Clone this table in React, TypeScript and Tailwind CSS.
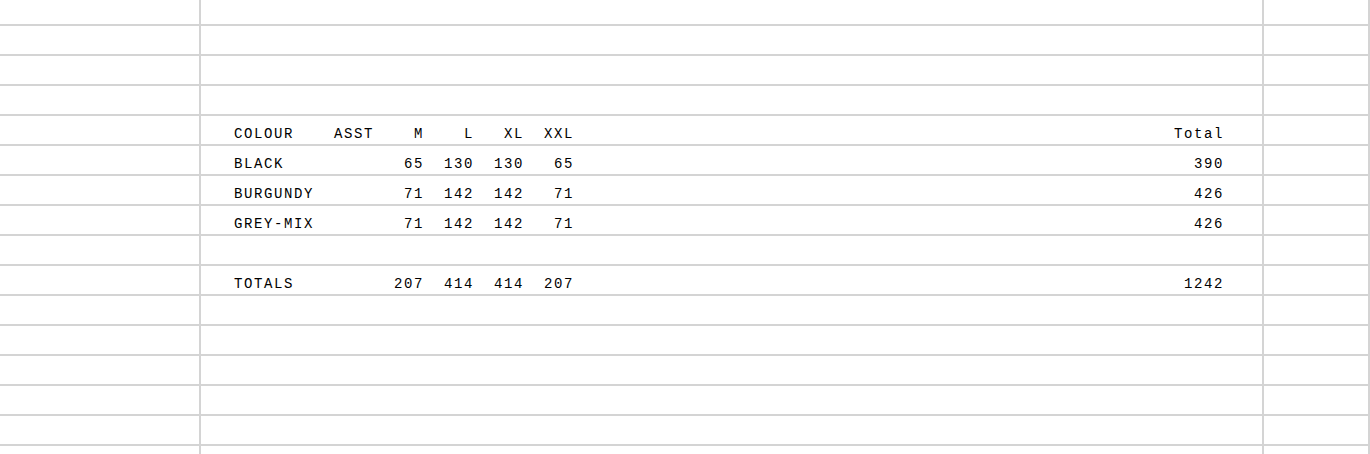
import React from 'react';

type Line = { label: string; asst: string; m: string; l: string; xl: string; xxl: string; total: string };

const lines: Record<number, Line> = {
  4: { label: 'COLOUR', asst: 'ASST', m: 'M', l: 'L', xl: 'XL', xxl: 'XXL', total: 'Total' },
  5: { label: 'BLACK', asst: '', m: '65', l: '130', xl: '130', xxl: '65', total: '390' },
  6: { label: 'BURGUNDY', asst: '', m: '71', l: '142', xl: '142', xxl: '71', total: '426' },
  7: { label: 'GREY-MIX', asst: '', m: '71', l: '142', xl: '142', xxl: '71', total: '426' },
  9: { label: 'TOTALS', asst: '', m: '207', l: '414', xl: '414', xxl: '207', total: '1242' },
};

const Cells: React.FC<{ line?: Line }> = ({ line }) => (
  <>
    <div className="w-[201px] shrink-0 border-r-2 border-[#d4d4d4]" />
    <div className="w-[1063px] shrink-0 border-r-2 border-[#d4d4d4] flex items-end pb-[2px] pl-[33px] font-['Liberation_Mono',monospace] text-[14px] leading-[16px] tracking-[1.6px] text-black whitespace-pre">
      {line && (
        <>
          <span className="w-[100px]">{line.label}</span>
          <span className="w-[40px] text-right">{line.asst}</span>
          <span className="w-[50px] text-right">{line.m}</span>
          <span className="w-[50px] text-right">{line.l}</span>
          <span className="w-[50px] text-right">{line.xl}</span>
          <span className="w-[50px] text-right">{line.xxl}</span>
          <span className="w-[650px] text-right">{line.total}</span>
        </>
      )}
    </div>
    <div className="w-[106px] shrink-0 border-r-2 border-[#d4d4d4]" />
  </>
);

export default function App() {
  const rows = Array.from({ length: 14 }, (_, i) => i + 1);
  return (
    <div className="w-[1370px] h-[454px] overflow-hidden bg-white">
      <div className="flex h-[26px] border-b-2 border-[#d4d4d4]">
        <Cells />
      </div>
      {rows.map((r) => (
        <div key={r} className="flex h-[30px] border-b-2 border-[#d4d4d4]">
          <Cells line={lines[r]} />
        </div>
      ))}
      <div className="flex h-[10px]">
        <Cells />
      </div>
    </div>
  );
}
